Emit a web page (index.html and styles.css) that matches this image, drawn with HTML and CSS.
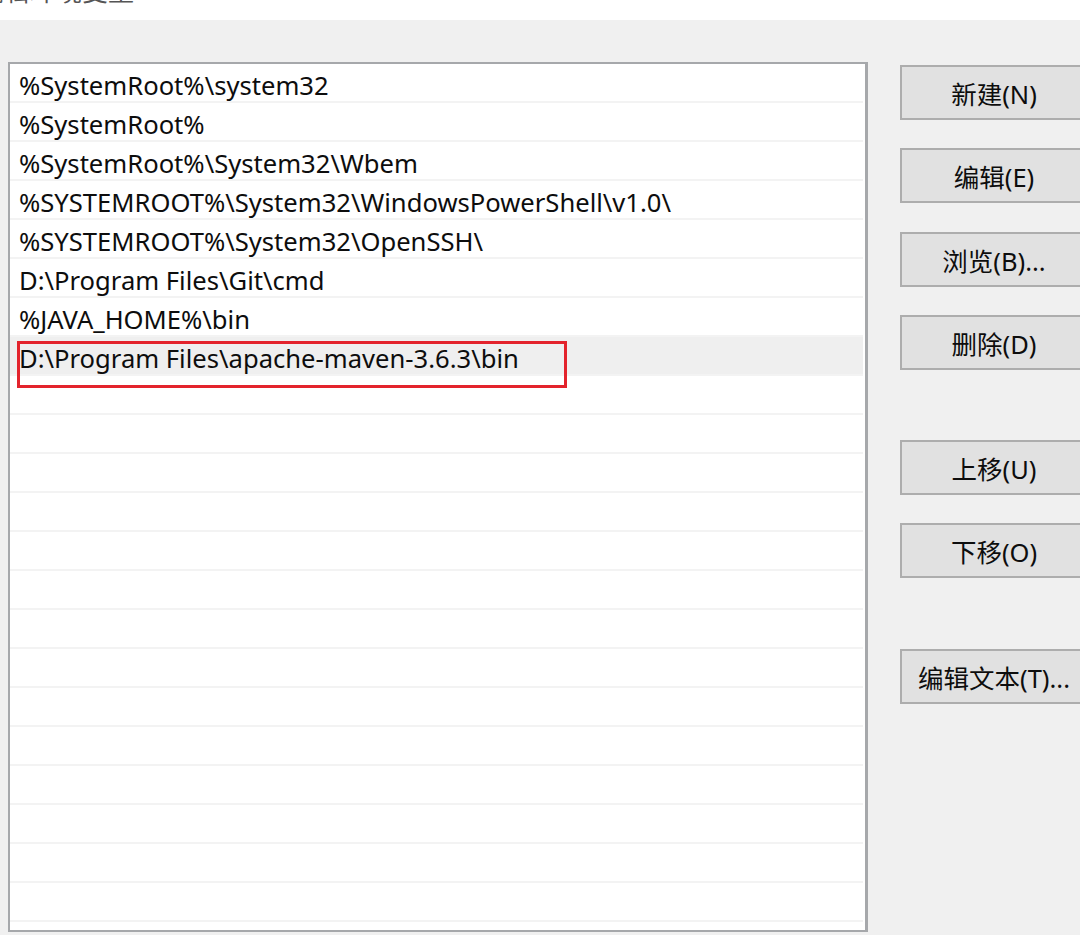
FILE: index.html
```html
<!DOCTYPE html>
<html lang="zh-CN">
<head>
<meta charset="utf-8">
<title>编辑环境变量</title>
<link rel="stylesheet" href="styles.css">
</head>
<body>
<div class="titlebar"><span class="title">编辑环境变量</span></div>
<div class="main">
  <div class="listbox">
    <div class="row">%SystemRoot%\system32</div>
    <div class="row">%SystemRoot%</div>
    <div class="row">%SystemRoot%\System32\Wbem</div>
    <div class="row">%SYSTEMROOT%\System32\WindowsPowerShell\v1.0\</div>
    <div class="row">%SYSTEMROOT%\System32\OpenSSH\</div>
    <div class="row">D:\Program Files\Git\cmd</div>
    <div class="row">%JAVA_HOME%\bin</div>
    <div class="row selected">D:\Program Files\apache-maven-3.6.3\bin<span class="highlight"></span></div>
    <div class="row"></div>
    <div class="row"></div>
    <div class="row"></div>
    <div class="row"></div>
    <div class="row"></div>
    <div class="row"></div>
    <div class="row"></div>
    <div class="row"></div>
    <div class="row"></div>
    <div class="row"></div>
    <div class="row"></div>
    <div class="row"></div>
    <div class="row"></div>
    <div class="row"></div>
    <div class="row"></div>
  </div>
  <div class="buttons">
    <div class="btn">新建(N)</div>
    <div class="btn">编辑(E)</div>
    <div class="btn">浏览(B)...</div>
    <div class="btn">删除(D)</div>
    <div class="btn group-start">上移(U)</div>
    <div class="btn">下移(O)</div>
    <div class="btn group-start">编辑文本(T)...</div>
  </div>
</div>
</body>
</html>
```

FILE: styles.css
```css
html, body {
  margin: 0;
  padding: 0;
}
body {
  width: 1080px;
  height: 935px;
  overflow: hidden;
  background: #f0f0f0;
  font-family: "Noto Sans", "Noto Sans CJK SC", sans-serif;
  color: #111;
}
.titlebar {
  height: 20px;
  background: #ffffff;
  overflow: hidden;
}
.title {
  display: block;
  margin-top: -29px;
  margin-left: -22px;
  font-size: 26px;
  line-height: 40px;
  color: #555;
}
.main {
  display: flex;
  align-items: flex-start;
  padding-top: 42px;
  padding-left: 8px;
}
.listbox {
  flex: none;
  width: 855px;
  height: 866px;
  border: 2px solid #a6a8ab;
  border-right-width: 3px;
  background: #ffffff;
  overflow: hidden;
}
.row {
  position: relative;
  height: 37px;
  line-height: 43px;
  border-bottom: 2px solid #f3f3f3;
  padding-left: 9px;
  margin-right: 2px;
  font-size: 25.6px;
  white-space: nowrap;
  color: #0d0d0d;
}
.row.selected {
  background: #efefef;
}
.highlight {
  position: absolute;
  left: 7px;
  top: 4px;
  width: 544px;
  height: 41px;
  border: 3px solid #e3232c;
  z-index: 2;
}
.buttons {
  flex: none;
  display: flex;
  flex-direction: column;
  margin-left: 32px;
  margin-top: 3px;
}
.btn {
  box-sizing: border-box;
  width: 188px;
  height: 55px;
  margin-bottom: 28.3px;
  background: #e1e1e1;
  border: 2px solid #adadad;
  display: flex;
  align-items: center;
  justify-content: center;
  font-size: 25.5px;
  color: #0d0d0d;
  white-space: nowrap;
}
.btn.group-start {
  margin-top: 42px;
}
```
